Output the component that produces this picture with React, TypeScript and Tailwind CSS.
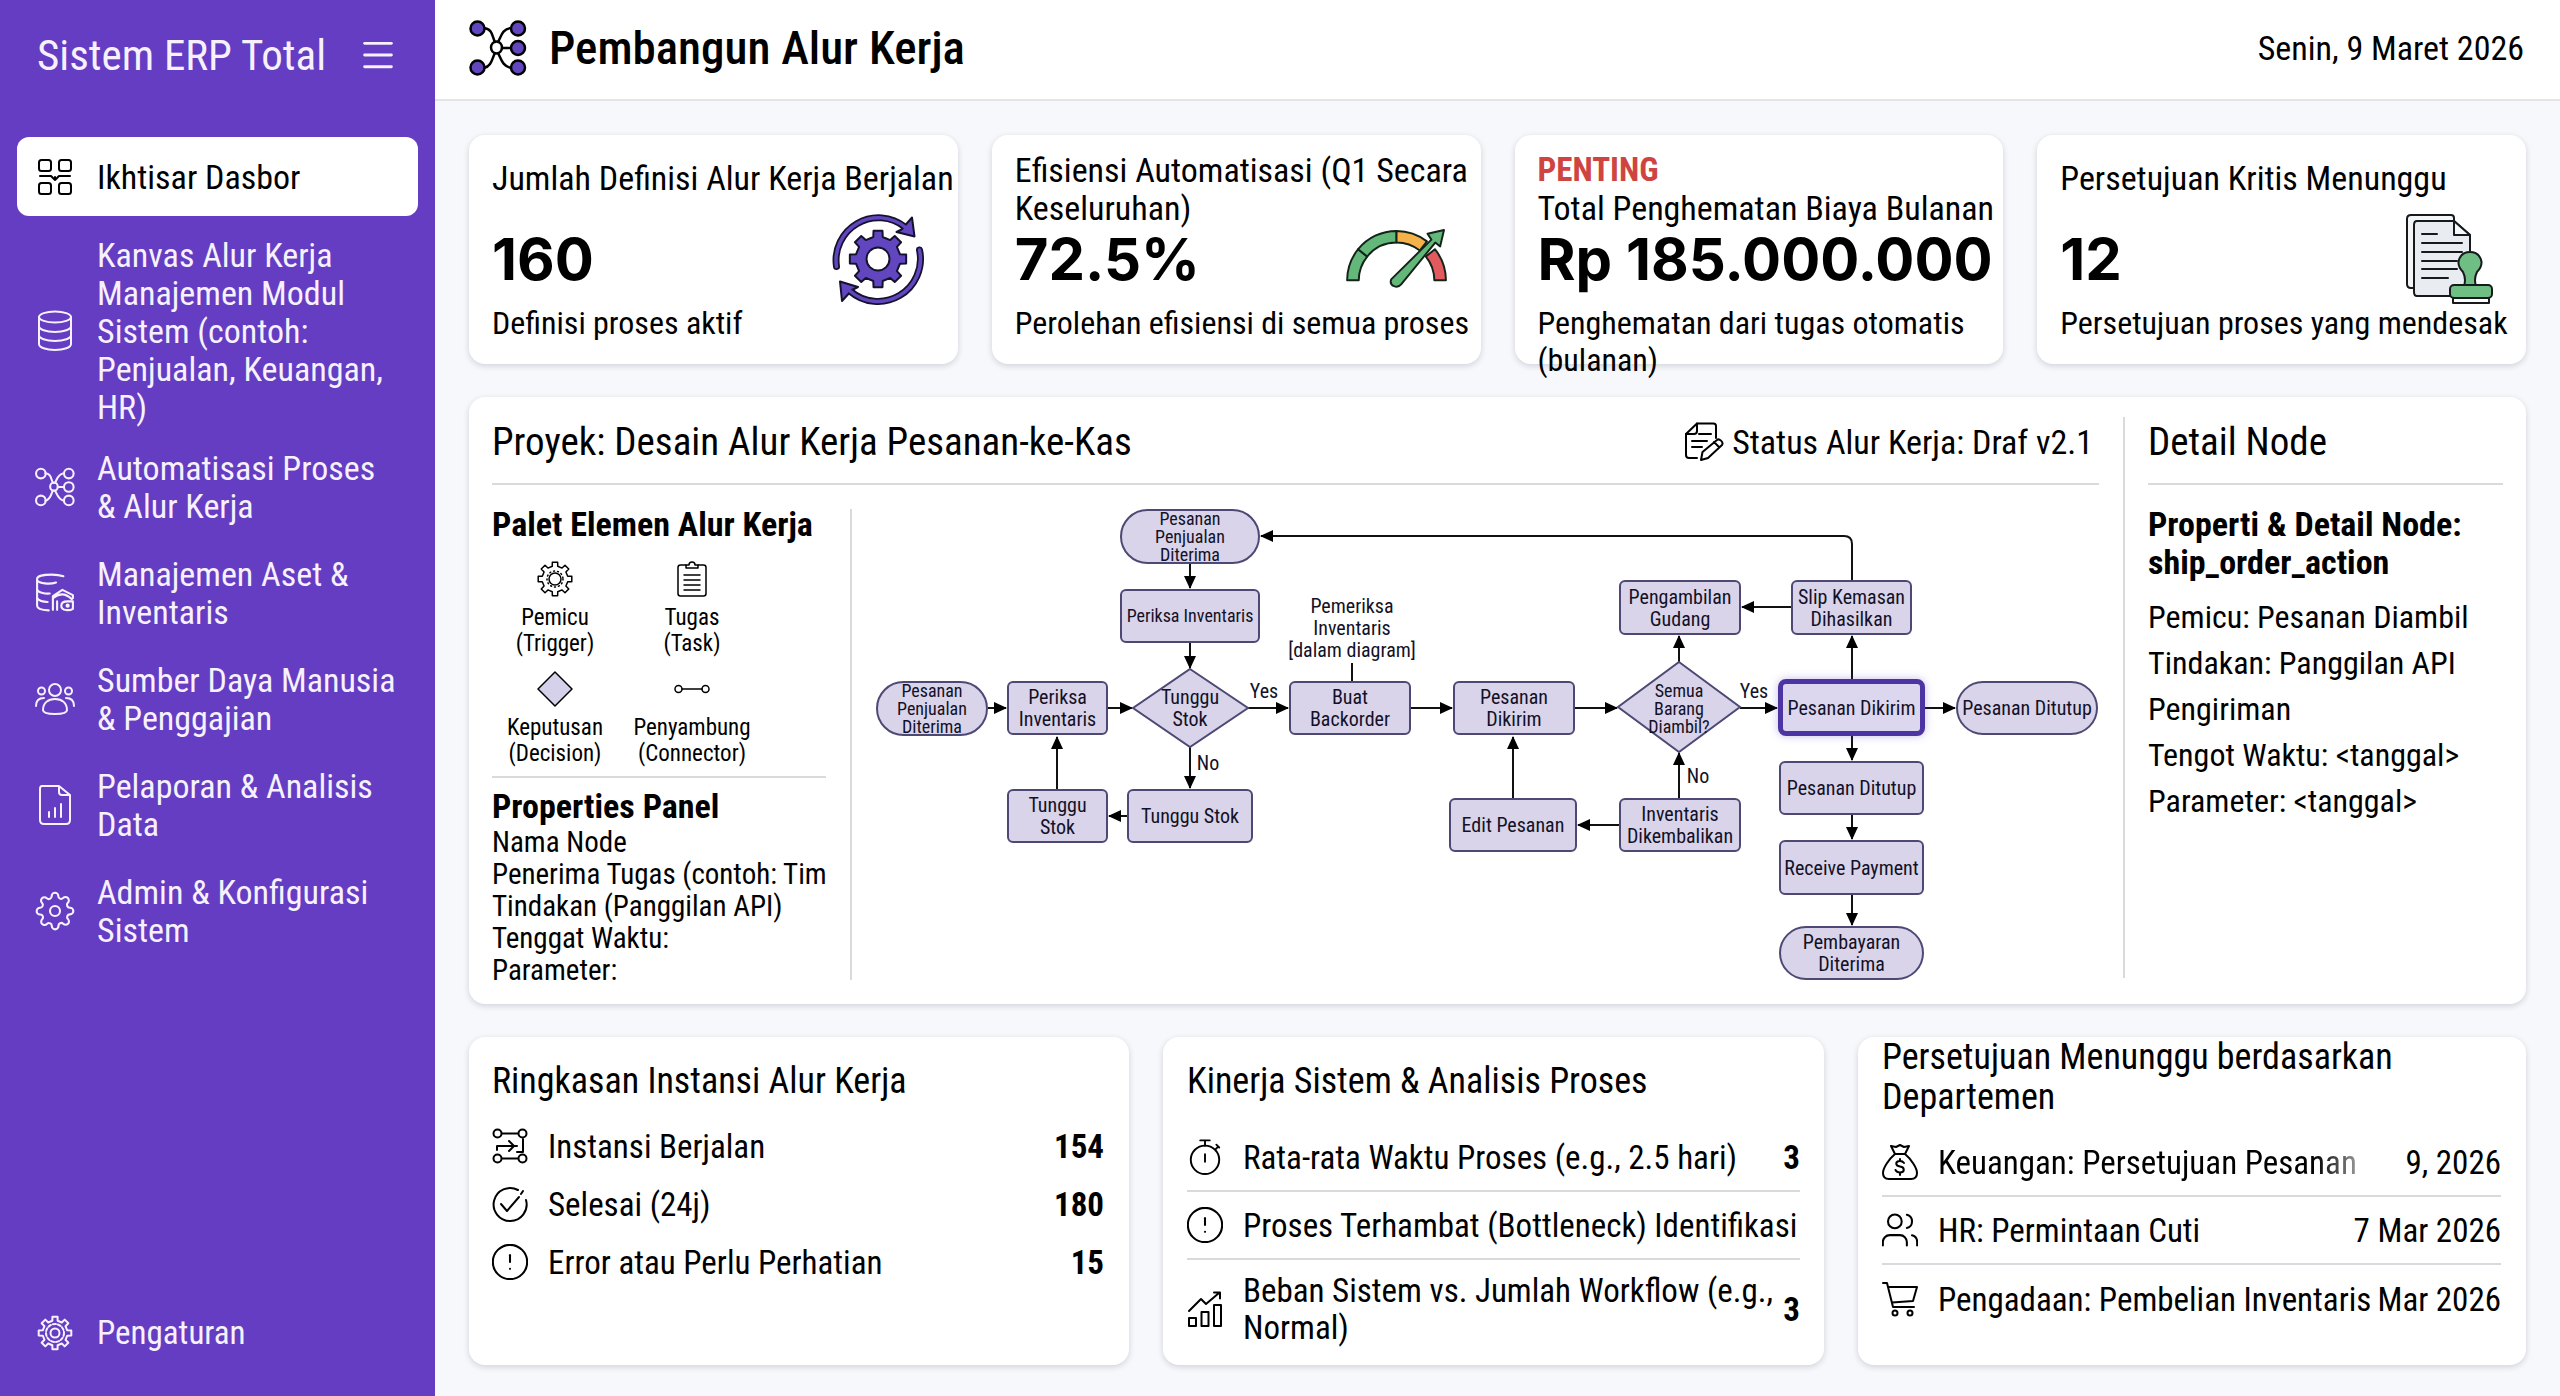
import type { ReactNode, SVGProps } from "react";
import { CircleAlert, Menu, Users } from "lucide-react";
import { FiSettings } from "react-icons/fi";

// ---------- icons ----------

type IconProps = SVGProps<SVGSVGElement>;

function Icon({ children, ...props }: IconProps & { children: ReactNode }) {
  return (
    <svg
      viewBox="0 0 36 36"
      fill="none"
      stroke="currentColor"
      strokeWidth={2}
      strokeLinecap="round"
      strokeLinejoin="round"
      aria-hidden="true"
      {...props}
    >
      {children}
    </svg>
  );
}

function gearPath(cx: number, cy: number, outer: number, inner: number, teeth: number) {
  const points: string[] = [];
  const step = (Math.PI * 2) / teeth;
  for (let i = 0; i < teeth; i++) {
    const mid = i * step - Math.PI / 2;
    const corners: [number, number][] = [
      [inner, -0.27],
      [outer, -0.2],
      [outer, 0.2],
      [inner, 0.27],
    ];
    corners.forEach(([r, k]) => {
      const a = mid + k * step;
      points.push(`${(cx + r * Math.cos(a)).toFixed(2)} ${(cy + r * Math.sin(a)).toFixed(2)}`);
    });
  }
  return `M${points.join("L")}Z`;
}

function DashboardIcon(props: IconProps) {
  return (
    <Icon {...props}>
      <rect x="2" y="1" width="12" height="11" rx="2.5" />
      <rect x="22" y="1" width="12" height="11" rx="2.5" />
      <rect x="2" y="24" width="12" height="11" rx="2.5" />
      <rect x="22" y="24" width="12" height="11" rx="2.5" />
      <path d="M3 17h11l4 4 4-4h11M18 21v-3" />
    </Icon>
  );
}

function DatabaseIcon(props: IconProps) {
  return (
    <Icon viewBox="0 0 36 42" {...props}>
      <ellipse cx="18" cy="7" rx="16" ry="5.5" />
      <path d="M2 7v27c0 3.500 7 6 16 6s16-2.500 16-6V7" />
      <path d="M2 16c0 3.500 7 6 16 6s16-2.500 16-6M2 25c0 3.500 7 6 16 6s16-2.500 16-6" />
    </Icon>
  );
}

function NetworkIcon({ nodeFill = "none", ...props }: IconProps & { nodeFill?: string }) {
  return (
    <Icon viewBox="0 0 58 56" strokeWidth={2.5} {...props}>
      <path d="M15 8c9 1 8 9 11 14M42 8c-9 1-10 9-13 14M26 33c-3 5-3 13-11 15M29 33c3 5 4 13 13 15M33 28h8" />
      <ellipse cx="27.500" cy="27.500" rx="5.500" ry="6" />
      <circle cx="8.500" cy="8.500" r="7" fill={nodeFill} />
      <circle cx="49" cy="8.500" r="7" fill={nodeFill} />
      <circle cx="49" cy="28" r="7" fill={nodeFill} />
      <circle cx="8.500" cy="47.500" r="7" fill={nodeFill} />
      <circle cx="49" cy="47.500" r="7" fill={nodeFill} />
    </Icon>
  );
}

function AssetIcon(props: IconProps) {
  return (
    <Icon viewBox="0 0 38 38" {...props}>
      <path d="M27 3c-3-1-7-1.500-11-1.500C8 1.500 2 3 2 5.500V31c0 2.500 4 4 11 4.500" />
      <path d="M2 7c2 3 12 4 18 2M2 16c2 3 8 4 12 3.500M2 24c2 2.500 6 3.500 10 3.500" />
      <path d="M17 35V22l9-6 10 5v3M17 24c6-5 12-5 18 1" />
      <path d="M21 35v-8M25 31c0-3 3-4 6-4h5v7c-3 2-11 2-11-3Z" />
      <circle cx="31" cy="31" r="1" />
    </Icon>
  );
}

function TeamIcon(props: IconProps) {
  return (
    <Icon viewBox="0 0 40 36" {...props}>
      <circle cx="20" cy="9" r="6" />
      <circle cx="6.500" cy="10" r="3.500" />
      <circle cx="33.500" cy="10" r="3.500" />
      <path d="M8 29c0-7 5-11 12-11s12 4 12 11c0 3-5 4-12 4S8 32 8 29Z" />
      <path d="M1 25c0-5 3-8 8-8M39 25c0-5-3-8-8-8" />
    </Icon>
  );
}

function ReportIcon(props: IconProps) {
  return (
    <Icon viewBox="0 0 36 42" {...props}>
      <path d="M5 2h17l11 9v25c0 2.500-1.500 4-4 4H7c-2.500 0-4-1.500-4-4V5c0-2 1-3 2-3ZM22 2v6c0 2 1 3 3 3h8" />
      <path d="M12 33v-5M18 33V24M24 33V20" />
    </Icon>
  );
}

function CogIcon(props: IconProps) {
  return (
    <Icon {...props}>
      <path d={gearPath(18, 18, 16.5, 12.5, 8)} />
      <circle cx="18" cy="18" r="9" strokeDasharray="3 2" />
      <circle cx="18" cy="18" r="4.500" />
    </Icon>
  );
}

function TriggerIcon(props: IconProps) {
  return (
    <Icon {...props}>
      <path d={gearPath(18, 18, 17, 13, 8)} />
      <circle cx="18" cy="18" r="6" />
      <circle cx="18" cy="18" r="8" strokeDasharray="1 3" />
    </Icon>
  );
}

function TaskIcon(props: IconProps) {
  return (
    <Icon {...props}>
      <path d="M12 4H6.500C5 4 4 5 4 6.500v26C4 34 5 35 6.500 35h23c1.500 0 2.500-1 2.500-2.500v-26C32 5 31 4 29.500 4H24" />
      <path d="M12 7V4h3c0-4 6-4 6 0h3v3Z" />
      <path d="M10 14h16M10 19h16M10 24h16M10 29h16" />
    </Icon>
  );
}

function DecisionIcon(props: IconProps) {
  return (
    <Icon {...props}>
      <path d="M18 1 35 18 18 35 1 18Z" fill="#d6d1ea" />
    </Icon>
  );
}

function ConnectorIcon(props: IconProps) {
  return (
    <Icon {...props}>
      <circle cx="4.500" cy="18" r="3.500" />
      <circle cx="31.500" cy="18" r="3.500" />
      <path d="M8 18h20" />
    </Icon>
  );
}

function DraftIcon(props: IconProps) {
  return (
    <Icon viewBox="0 0 40 40" {...props}>
      <path d="M32 16V4c0-1.500-1-2.500-2.500-2.500H13L2 12v21c0 2 1 3 3 3h8" />
      <path d="M13 1.500V9c0 2-1 3-3 3H2M15 12h12M8 19h15M8 25h10" />
      <path d="m17 38 1.500-8L33 18c2-2 7 2 5 5L24 36ZM30 20l5 5" />
    </Icon>
  );
}

function CycleIcon(props: IconProps) {
  const arcs = "M6.500 54.500A42.500 42.500 0 0 1 75 15M89.500 38A42.500 42.500 0 0 1 20 79";
  return (
    <Icon viewBox="0 0 96 94" {...props}>
      <path d={arcs} stroke="#15122e" strokeWidth={7} />
      <path d="m82 5.500 2.500 19-18-4.500 5-2.500ZM10 69.500 28 75l-6 3-10 11Z" fill="#6246c0" stroke="#15122e" />
      <path d={arcs} stroke="#6246c0" strokeWidth={3.5} />
      <path d={gearPath(48, 47, 28.5, 22.5, 8)} fill="#6246c0" stroke="#15122e" />
      <circle cx="48" cy="47" r="11.500" fill="#fff" stroke="#15122e" />
    </Icon>
  );
}

function ring(from: number, to: number) {
  const at = (r: number, deg: number) => {
    const a = (deg * Math.PI) / 180;
    return `${(52 + r * Math.cos(a)).toFixed(1)} ${(54 - r * Math.sin(a)).toFixed(1)}`;
  };
  return `M${at(51, from)}A51 51 0 0 1 ${at(51, to)}L${at(39, to)}A39 39 0 0 0 ${at(39, from)}Z`;
}

function GaugeIcon(props: IconProps) {
  return (
    <Icon viewBox="0 0 106 64" stroke="#14231a" {...props}>
      <path d={ring(180, 141)} fill="#62b779" />
      <path d={ring(141, 90)} fill="#62b779" />
      <path d={ring(90, 52)} fill="#f5b24a" />
      <path d={ring(39, 0)} fill="#e25a5e" />
      <path d="M46.500 53 88 12l-4-6 17-4-4 17-5-4-35 43c-4 5-13 2-10.500-5Z" fill="#62b779" />
    </Icon>
  );
}

function StampIcon(props: IconProps) {
  return (
    <Icon viewBox="0 0 88 90" stroke="#161a1d" {...props}>
      <path d="M5 1h40c2 0 3 1 3 3v70H5c-3 0-4-1-4-4V5c0-3 1-4 4-4Z" fill="#f4f5f7" />
      <path d="M11 7h37l16 14v57c0 3-1 4-3 4H11c-2 0-3-1-3-4V11c0-3 1-4 3-4Z" fill="#e9edf1" />
      <path d="M48 7v14h16Z" fill="#f7f8fa" />
      <path d="M16 20h15M16 29h40M16 38h40M16 47h35M16 55h35M16 64h26" />
      <path d="M58 72c2-6 1-10-1-14-9-9-3-20 7-20s16 11 7 20c-2 4-3 8-1 14Z" fill="#6fbf84" />
      <rect x="44" y="71" width="42" height="13" rx="4" fill="#6fbf84" />
      <path d="M47 84h36v5H47Z" fill="#fff" />
    </Icon>
  );
}

function InstanceIcon(props: IconProps) {
  return (
    <Icon {...props}>
      <circle cx="5.500" cy="5.500" r="4" />
      <circle cx="30.500" cy="5.500" r="4" />
      <circle cx="5.500" cy="30.500" r="4" />
      <circle cx="30.500" cy="30.500" r="4" />
      <path d="M10 5.500h16M10 30.500h16M5 22v-4h20M31 11v13h-6M17 13l5 5-5 5" />
    </Icon>
  );
}

function DoneIcon(props: IconProps) {
  return (
    <Icon {...props}>
      <path d="M26 4A16.500 16.500 0 1 0 34 14M9 18l6 7 12-14M29 8l2-3" />
    </Icon>
  );
}

function StopwatchIcon(props: IconProps) {
  return (
    <Icon viewBox="0 0 36 38" {...props}>
      <circle cx="18" cy="22" r="15" />
      <path d="M18 7V1.500M13 1.500h10M18 16v8M29 11l3-3M30 6l3 3" />
    </Icon>
  );
}

function TrendIcon(props: IconProps) {
  return (
    <Icon {...props}>
      <path d="M2 20 14 8l5 5L32 2M27 1.500h6v6" />
      <path d="M2 27h7v8H2ZM14.500 21h7v14h-7ZM27 14h7v21h-7Z" />
    </Icon>
  );
}

function MoneyBagIcon(props: IconProps) {
  return (
    <Icon {...props}>
      <path d="M13 10 9 2l5 1 4-2 4 2 5-1-4 8ZM13 10c-6 5-12 14-12 19 0 4 2 6 6 6h22c4 0 6-2 6-6 0-5-6-14-12-19" />
      <path d="M22 19c-1-1.500-2.500-2-4-2-5 0-5 5 0 5.500s5 6 0 6c-2 0-3.500-.5-4.500-2.500M18 15v2M18 28.500V31" />
    </Icon>
  );
}

function CartIcon(props: IconProps) {
  return (
    <Icon {...props}>
      <path d="M1 2h4l6 24h21M6.500 6H35l-4 14-21 1.500" />
      <circle cx="13" cy="32" r="2.500" />
      <circle cx="28" cy="32" r="2.500" />
    </Icon>
  );
}

// ---------- sidebar ----------

const navItems = [
  { label: "Kanvas Alur Kerja Manajemen Modul Sistem (contoh: Penjualan, Keuangan, HR)", icon: <DatabaseIcon className="h-[42px] w-9" /> },
  { label: "Automatisasi Proses & Alur Kerja", icon: <NetworkIcon className="h-10 w-10" strokeWidth={3} /> },
  { label: "Manajemen Aset & Inventaris", icon: <AssetIcon className="h-10 w-10" /> },
  { label: "Sumber Daya Manusia & Penggajian", icon: <TeamIcon className="h-9 w-10" /> },
  { label: "Pelaporan & Analisis Data", icon: <ReportIcon className="h-[42px] w-9" /> },
  { label: "Admin & Konfigurasi Sistem", icon: <FiSettings className="size-10" strokeWidth={1.25} /> },
];

function Sidebar() {
  return (
    <aside className="flex w-[435px] shrink-0 flex-col bg-[#643dc2] px-[17px] text-[34px] leading-[38px] text-[#f6f1fd]">
      <div className="flex h-[110px] items-center justify-between pl-5 pr-5">
        <span className="text-[43px] leading-[52px]">Sistem ERP Total</span>
        <button type="button" aria-label="Menu">
          <Menu className="size-10" strokeWidth={1.75} />
        </button>
      </div>
      <nav className="mt-[27px] flex flex-col">
        <a href="#dasbor" className="mb-3 flex h-[79px] items-center gap-6 rounded-xl bg-white pl-5 text-black">
          <DashboardIcon className="size-9 shrink-0" />
          Ikhtisar Dasbor
        </a>
        {navItems.map((item) => (
          <a key={item.label} href="#modul" className="flex min-h-[106px] items-center gap-6 py-2 pl-5 pr-5">
            <span className="flex w-9 shrink-0 justify-center">
              <span className="shrink-0">{item.icon}</span>
            </span>
            <span>{item.label}</span>
          </a>
        ))}
      </nav>
      <a href="#pengaturan" className="mb-11 mt-auto flex items-center gap-6 pl-5 text-[33px]">
        <CogIcon className="size-9 shrink-0" />
        Pengaturan
      </a>
    </aside>
  );
}

// ---------- stat cards ----------

const card = "rounded-2xl bg-white shadow-[0_2px_6px_rgba(20,20,50,0.16)]";

type Stat = { title: string; tag?: string; tall?: boolean; value: string; note: string; icon?: ReactNode };

const stats: Stat[] = [
  {
    title: "Jumlah Definisi Alur Kerja Berjalan",
    value: "160",
    note: "Definisi proses aktif",
    icon: <CycleIcon className="h-[94px] w-24" />,
  },
  {
    title: "Efisiensi Automatisasi (Q1 Secara Keseluruhan)",
    tall: true,
    value: "72.5%",
    note: "Perolehan efisiensi di semua proses",
    icon: <GaugeIcon className="h-[62px] w-[103px]" />,
  },
  {
    title: "Total Penghematan Biaya Bulanan",
    tag: "PENTING",
    tall: true,
    value: "Rp 185.000.000",
    note: "Penghematan dari tugas otomatis (bulanan)",
  },
  {
    title: "Persetujuan Kritis Menunggu",
    value: "12",
    note: "Persetujuan proses yang mendesak",
    icon: <StampIcon className="h-[90px] w-[88px]" />,
  },
];

function StatCard({ stat }: { stat: Stat }) {
  return (
    <section className={`${card} h-[229px] pl-[23px] pr-1 pt-4`}>
      <h2 className={`h-[76px] text-[34px] ${stat.tall ? "leading-[38px]" : "leading-[54px]"}`}>
        {stat.tag && <strong className="block text-[33px] font-bold text-[#cf4440]">{stat.tag}</strong>}
        {stat.title}
      </h2>
      <div className="flex h-16 items-center justify-between pr-7">
        <span className="whitespace-nowrap font-['Inter',sans-serif] text-[58px] font-bold leading-[64px]">{stat.value}</span>
        {stat.icon}
      </div>
      <p className="mt-3.5 text-[32px] leading-[37px]">{stat.note}</p>
    </section>
  );
}

// ---------- workflow diagram ----------

type NodeShape = "box" | "pill" | "active" | "text";
type FlowNode = { x: number; y: number; w: number; h: number; shape: NodeShape; lines: string[]; small?: boolean };

const nodes: FlowNode[] = [
  { x: 244, y: 0, w: 140, h: 55, shape: "pill", lines: ["Pesanan", "Penjualan", "Diterima"], small: true },
  { x: 244, y: 80, w: 140, h: 54, shape: "box", lines: ["Periksa Inventaris"], small: true },
  { x: 257, y: 160, w: 114, h: 78, shape: "text", lines: ["Tunggu", "Stok"] },
  { x: 0, y: 172, w: 112, h: 55, shape: "pill", lines: ["Pesanan", "Penjualan", "Diterima"], small: true },
  { x: 131, y: 172, w: 101, h: 54, shape: "box", lines: ["Periksa", "Inventaris"] },
  { x: 131, y: 280, w: 101, h: 54, shape: "box", lines: ["Tunggu", "Stok"] },
  { x: 251, y: 280, w: 126, h: 54, shape: "box", lines: ["Tunggu Stok"] },
  { x: 413, y: 172, w: 122, h: 54, shape: "box", lines: ["Buat", "Backorder"] },
  { x: 406, y: 86, w: 140, h: 66, shape: "text", lines: ["Pemeriksa", "Inventaris", "[dalam diagram]"] },
  { x: 577, y: 172, w: 122, h: 54, shape: "box", lines: ["Pesanan", "Dikirim"] },
  { x: 742, y: 160, w: 122, h: 80, shape: "text", lines: ["Semua", "Barang", "Diambil?"], small: true },
  { x: 743, y: 71, w: 122, h: 55, shape: "box", lines: ["Pengambilan", "Gudang"] },
  { x: 915, y: 71, w: 121, h: 55, shape: "box", lines: ["Slip Kemasan", "Dihasilkan"] },
  { x: 902, y: 170, w: 147, h: 57, shape: "active", lines: ["Pesanan Dikirim"] },
  { x: 1080, y: 172, w: 142, h: 54, shape: "pill", lines: ["Pesanan Ditutup"] },
  { x: 903, y: 252, w: 145, h: 54, shape: "box", lines: ["Pesanan Ditutup"] },
  { x: 903, y: 331, w: 145, h: 55, shape: "box", lines: ["Receive Payment"] },
  { x: 903, y: 417, w: 145, h: 54, shape: "pill", lines: ["Pembayaran", "Diterima"] },
  { x: 743, y: 289, w: 122, h: 54, shape: "box", lines: ["Inventaris", "Dikembalikan"] },
  { x: 573, y: 289, w: 128, h: 54, shape: "box", lines: ["Edit Pesanan"] },
  { x: 366, y: 171, w: 44, h: 22, shape: "text", lines: ["Yes"] },
  { x: 312, y: 243, w: 40, h: 22, shape: "text", lines: ["No"] },
  { x: 856, y: 171, w: 44, h: 22, shape: "text", lines: ["Yes"] },
  { x: 802, y: 256, w: 40, h: 22, shape: "text", lines: ["No"] },
];

const shapeClass: Record<NodeShape, string> = {
  box: "rounded-md border-2 border-[#4d4974] bg-[#d9d4ea]",
  pill: "rounded-full border-2 border-[#4d4974] bg-[#d9d4ea]",
  active: "rounded-lg border-[5px] border-[#4c35a3] bg-[#dcd7ee] shadow-[0_0_8px_rgba(98,70,192,0.35)]",
  text: "",
};

const edges = [
  "M314 55V79",
  "M314 134V159",
  "M112 199H130",
  "M232 199H256",
  "M372 199H412",
  "M314 238V279",
  "M251 307H233",
  "M181 280V228",
  "M535 199H576",
  "M699 199H741",
  "M803 153V127",
  "M803 289V244",
  "M743 316H702",
  "M637 289V228",
  "M864 199H901",
  "M976 170V127",
  "M915 98H866",
  "M976 71V35Q976 27 968 27H385",
  "M1049 199H1079",
  "M976 227V251",
  "M976 306V330",
  "M976 386V416",
];

function Diagram() {
  return (
    <div className="relative h-[471px] w-[1222px]">
      <svg className="absolute inset-0" width="1222" height="471" fill="none" stroke="#111" strokeWidth="2" aria-hidden="true">
        <defs>
          <marker id="arrow" markerUnits="userSpaceOnUse" markerWidth="13" markerHeight="12" refX="12" refY="6" orient="auto">
            <path d="M0 0 13 6 0 12Z" fill="#000" stroke="none" />
          </marker>
        </defs>
        {edges.map((d) => (
          <path key={d} d={d} markerEnd="url(#arrow)" />
        ))}
        <path d="M476 154V172" />
        <path d="M314 160 372 199 314 238 257 199Z" fill="#d9d4ea" stroke="#4d4974" />
        <path d="M803 153 864 198 803 243 742 198Z" fill="#d9d4ea" stroke="#4d4974" />
      </svg>
      {nodes.map((n, i) => (
        <div
          key={i}
          className={`absolute flex flex-col items-center justify-center whitespace-nowrap text-[#131127] ${shapeClass[n.shape]} ${
            n.small ? "text-[18px] leading-[18px]" : "text-[20px] leading-[22px]"
          }`}
          style={{ left: n.x, top: n.y, width: n.w, height: n.h }}
        >
          {n.lines.map((line) => (
            <span key={line}>{line}</span>
          ))}
        </div>
      ))}
    </div>
  );
}

// ---------- workflow panel ----------

const palette = [
  { name: "Pemicu", type: "(Trigger)", icon: <TriggerIcon className="size-9" strokeWidth={1.5} /> },
  { name: "Tugas", type: "(Task)", icon: <TaskIcon className="size-9" strokeWidth={1.5} /> },
  { name: "Keputusan", type: "(Decision)", icon: <DecisionIcon className="size-9" strokeWidth={1.5} /> },
  { name: "Penyambung", type: "(Connector)", icon: <ConnectorIcon className="size-9" strokeWidth={1.5} /> },
];

const properties = ["Nama Node", "Penerima Tugas (contoh: Tim", "Tindakan (Panggilan API)", "Tenggat Waktu:", "Parameter:"];

const nodeDetails = [
  "Pemicu: Pesanan Diambil",
  "Tindakan: Panggilan API Pengiriman",
  "Tengot Waktu: <tanggal>",
  "Parameter: <tanggal>",
];

function WorkflowPanel() {
  return (
    <section className={`${card} flex`}>
      <div className="min-w-0 flex-1 pb-[18px] pl-[23px] pr-6">
        <div className="flex h-[88px] items-center justify-between border-b-2 border-[#d9dadd] pr-1.5 pt-1">
          <h2 className="text-[39px] leading-[44px]">Proyek: Desain Alur Kerja Pesanan-ke-Kas</h2>
          <div className="flex items-center gap-2 text-[34px] leading-[38px]">
            <DraftIcon className="size-10" />
            Status Alur Kerja: Draf v2.1
          </div>
        </div>
        <div className="flex items-start pt-6">
          <div className="w-[358px] shrink-0 pr-6">
            <h3 className="text-[34px] font-bold leading-[30px]">Palet Elemen Alur Kerja</h3>
            <ul className="mt-[22px] grid grid-cols-[126px_148px] gap-y-3.5 border-b-2 border-[#d9dadd] pb-[9px]">
              {palette.map((p) => (
                <li key={p.name} className="flex flex-col items-center text-[23px] leading-[26px]">
                  <span className="mb-2">{p.icon}</span>
                  <span>{p.name}</span>
                  <span>{p.type}</span>
                </li>
              ))}
            </ul>
            <h3 className="mt-3 text-[34px] font-bold leading-8">Properties Panel</h3>
            <ul className="mt-1 whitespace-nowrap text-[29px] leading-8">
              {properties.map((p) => (
                <li key={p}>{p}</li>
              ))}
            </ul>
          </div>
          <div className="border-l-2 border-[#d9dadd] pl-6">
            <Diagram />
          </div>
        </div>
      </div>
      <aside className="mb-[26px] mt-5 w-[403px] shrink-0 border-l-2 border-[#d9dadd] pl-[23px] pr-[23px]">
        <h2 className="flex h-[68px] items-center border-b-2 border-[#d9dadd] pb-4 text-[39px] leading-[44px]">Detail Node</h2>
        <h3 className="mt-5 text-[34px] font-bold leading-[38px]">Properti & Detail Node: ship_order_action</h3>
        <ul className="mt-[13px] text-[32px] leading-[46px]">
          {nodeDetails.map((d) => (
            <li key={d}>{d}</li>
          ))}
        </ul>
      </aside>
    </section>
  );
}

// ---------- bottom lists ----------

type Row = { icon: ReactNode; label: string; value?: string; faded?: boolean };

const alertIcon = <CircleAlert viewBox="1.5 1.5 21 21" strokeWidth={1.2} />;

const instances: Row[] = [
  { icon: <InstanceIcon />, label: "Instansi Berjalan", value: "154" },
  { icon: <DoneIcon />, label: "Selesai (24j)", value: "180" },
  { icon: alertIcon, label: "Error atau Perlu Perhatian", value: "15" },
];

const performance: Row[] = [
  { icon: <StopwatchIcon />, label: "Rata-rata Waktu Proses (e.g., 2.5 hari)", value: "3" },
  { icon: alertIcon, label: "Proses Terhambat (Bottleneck) Identifikasi" },
  { icon: <TrendIcon />, label: "Beban Sistem vs. Jumlah Workflow (e.g., Normal)", value: "3" },
];

const approvals: Row[] = [
  { icon: <MoneyBagIcon />, label: "Keuangan: Persetujuan Pesanan", value: "9, 2026", faded: true },
  { icon: <Users viewBox="1.5 1.5 21 21" strokeWidth={1.2} />, label: "HR: Permintaan Cuti", value: "7 Mar 2026" },
  { icon: <CartIcon />, label: "Pengadaan: Pembelian Inventaris", value: "Mar 2026" },
];

const fade = "bg-linear-to-r from-black from-88% to-[#9a9a9a] bg-clip-text text-transparent";

function ListRow({ row, className, valueClass }: { row: Row; className: string; valueClass: string }) {
  return (
    <li className={`flex items-center text-[33px] leading-[37px] ${className}`}>
      <span className="mr-5 size-9 shrink-0 [&>svg]:size-9">{row.icon}</span>
      <span className="flex-1">
        <span className={row.faded ? fade : ""}>{row.label}</span>
      </span>
      {row.value && <span className={`shrink-0 ${valueClass}`}>{row.value}</span>}
    </li>
  );
}

const divided = "min-h-[68px] border-b-2 border-[#d9dadd] last:border-b-0";

function BottomCards() {
  return (
    <div className="grid flex-1 grid-cols-[660fr_661fr_668fr] gap-[34px]">
      <section className={`${card} pl-[23px] pr-[25px] pt-6`}>
        <h2 className="text-[36px] leading-10">Ringkasan Instansi Alur Kerja</h2>
        <ul className="mt-4">
          {instances.map((row) => (
            <ListRow key={row.label} row={row} className="h-[58px]" valueClass="font-bold" />
          ))}
        </ul>
      </section>
      <section className={`${card} px-6 pt-6`}>
        <h2 className="text-[36px] leading-10">Kinerja Sistem & Analisis Proses</h2>
        <ul className="mt-[23px]">
          {performance.map((row) => (
            <ListRow key={row.label} row={row} className={`${divided} last:h-[98px]`} valueClass="font-bold" />
          ))}
        </ul>
      </section>
      <section className={`${card} pl-6 pr-[25px]`}>
        <h2 className="text-[36px] leading-10">Persetujuan Menunggu berdasarkan Departemen</h2>
        <ul className="mt-3 whitespace-nowrap">
          {approvals.map((row) => (
            <ListRow key={row.label} row={row} className={divided} valueClass="" />
          ))}
        </ul>
      </section>
    </div>
  );
}

export default function App() {
  return (
    <div className="flex min-h-screen bg-[#f7f8fb] font-['Roboto_Condensed',Roboto,sans-serif] text-black">
      <Sidebar />
      <div className="flex min-w-0 flex-1 flex-col">
        <header className="flex h-[101px] shrink-0 items-center justify-between border-b-2 border-[#e3e4e7] bg-white pb-1 pl-[34px] pr-9">
          <div className="flex items-center gap-[22px]">
            <NetworkIcon className="h-14 w-[58px]" nodeFill="#6246c0" />
            <h1 className="text-[47px] font-medium leading-[54px]">Pembangun Alur Kerja</h1>
          </div>
          <span className="text-[34px] leading-[38px]">Senin, 9 Maret 2026</span>
        </header>
        <main className="flex flex-1 flex-col gap-[33px] px-[34px] pb-[31px] pt-[34px]">
          <div className="grid grid-cols-4 gap-[34px]">
            {stats.map((stat) => (
              <StatCard key={stat.title} stat={stat} />
            ))}
          </div>
          <WorkflowPanel />
          <BottomCards />
        </main>
      </div>
    </div>
  );
}
